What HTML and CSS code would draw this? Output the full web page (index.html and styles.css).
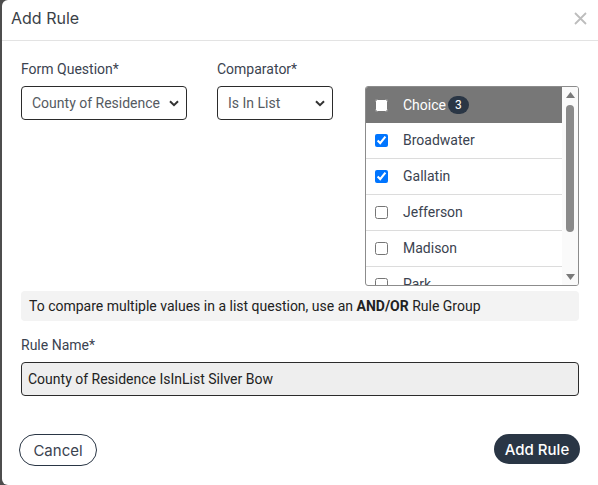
FILE: index.html
```html
<!DOCTYPE html>
<html lang="en">
<head>
<meta charset="utf-8">
<title>Add Rule</title>
<link rel="stylesheet" href="styles.css">
</head>
<body>
<div class="dialog">
  <div class="header">
    <div class="title">Add Rule</div>
    <svg class="close" width="13" height="13" viewBox="0 0 13 13"><path d="M1 1L12 12M12 1L1 12" stroke="#bdbdbd" stroke-width="1.8" fill="none"/></svg>
  </div>
  <div class="body">
    <div class="row">
      <div class="field f1">
        <label class="label">Form Question*</label>
        <div class="select">County of Residence</div>
      </div>
      <div class="field f2">
        <label class="label">Comparator*</label>
        <div class="select">Is In List</div>
      </div>
      <div class="listbox">
        <div class="list">
          <div class="list-head">
            <input type="checkbox" class="cb">
            <span class="head-text">Choice</span>
            <span class="badge">3</span>
          </div>
          <div class="item"><input type="checkbox" class="cb" checked><span>Broadwater</span></div>
          <div class="item"><input type="checkbox" class="cb" checked><span>Gallatin</span></div>
          <div class="item"><input type="checkbox" class="cb"><span>Jefferson</span></div>
          <div class="item"><input type="checkbox" class="cb"><span>Madison</span></div>
          <div class="item"><input type="checkbox" class="cb"><span>Park</span></div>
        </div>
        <div class="scrollbar">
          <svg class="arrow" width="9" height="6" viewBox="0 0 9 6"><path d="M4.5 0L9 6H0Z" fill="#7a7a7a"/></svg>
          <div class="track"><div class="thumb"></div></div>
          <svg class="arrow" width="9" height="6" viewBox="0 0 9 6"><path d="M0 0H9L4.5 6Z" fill="#7a7a7a"/></svg>
        </div>
      </div>
    </div>
    <div class="info">To compare multiple values in a list question, use an <b>AND/OR</b> Rule Group</div>
    <label class="label rn">Rule Name*</label>
    <div class="input">County of Residence IsInList Silver Bow</div>
  </div>
  <div class="footer">
    <button class="btn cancel">Cancel</button>
    <button class="btn primary">Add Rule</button>
  </div>
</div>
</body>
</html>
```
FILE: styles.css
```css
html, body {
  margin: 0;
  padding: 0;
}
body {
  background: #4d4d4d;
  width: 598px;
  height: 485px;
  overflow: hidden;
  font-family: Roboto, "Liberation Sans", sans-serif;
}
.dialog {
  margin-left: 2px;
  width: 596px;
  height: 485px;
  background: #fff;
  border-radius: 6px 0 0 6px;
  display: flex;
  flex-direction: column;
}
.header {
  height: 40px;
  border-bottom: 1px solid #e3e3e3;
  display: flex;
  align-items: center;
  justify-content: space-between;
  padding: 0 11px 0 9px;
}
.title {
  font-family: Inter, "Open Sans", sans-serif;
  font-size: 16px;
  color: #3a3f47;
  margin-top: -4px;
}
.close {
  margin-top: -4px;
}
.body {
  padding: 0 19px;
}
.row {
  display: flex;
  align-items: flex-start;
  margin-top: 18px;
}
.field {
  display: flex;
  flex-direction: column;
}
.f1 { width: 166px; }
.f2 { width: 116px; margin-left: 30px; }
.label {
  font-size: 14px;
  line-height: 20px;
  color: #3b4350;
  margin-bottom: 7px;
}
.select {
  box-sizing: border-box;
  height: 34px;
  border: 1px solid #2b2b2b;
  border-radius: 4px;
  padding: 0 20px 0 10px;
  font-size: 14px;
  line-height: 32px;
  color: #555a61;
  white-space: nowrap;
  background: url("data:image/svg+xml;utf8,<svg xmlns='http://www.w3.org/2000/svg' width='10' height='7' viewBox='0 0 10 7'><path d='M1 1.2L5 5.2L9 1.2' stroke='%23333' stroke-width='2' fill='none'/></svg>") no-repeat right 7px center;
}
.listbox {
  margin-left: 32px;
  margin-top: 27px;
  width: 214px;
  height: 200px;
  box-sizing: border-box;
  border: 1px solid #8c8c8c;
  border-radius: 3px;
  display: flex;
  overflow: hidden;
}
.list {
  flex: 1;
  overflow: hidden;
}
.list-head {
  height: 36px;
  background: #777777;
  display: flex;
  align-items: center;
  padding-left: 9px;
  color: #fff;
  font-size: 14px;
}
.cb {
  width: 13px;
  height: 13px;
  margin: 0 15px 0 0;
  flex: none;
}
.badge {
  margin-left: 2px;
  background: #2a3645;
  color: #fff;
  font-size: 12px;
  height: 18px;
  line-height: 18px;
  padding: 0 7px;
  border-radius: 9px;
}
.item {
  height: 35px;
  border-bottom: 1px solid #dcdcdc;
  display: flex;
  align-items: center;
  padding-left: 9px;
  font-size: 14px;
  color: #3b4350;
}
.item span {
  margin-top: -2px;
}
.scrollbar {
  width: 16px;
  background: #fafafa;
  display: flex;
  flex-direction: column;
  align-items: center;
}
.arrow {
  flex: none;
  margin: 5px 0;
}
.track {
  flex: 1;
  width: 100%;
  display: flex;
  justify-content: center;
}
.thumb {
  width: 8px;
  height: 127px;
  margin-top: 2px;
  background: #8a8a8a;
  border-radius: 4px;
}
.info {
  margin-top: 5px;
  height: 30px;
  line-height: 30px;
  background: #f3f3f3;
  border-radius: 4px;
  padding: 0 8px;
  font-size: 14px;
  color: #222;
}
.info b {
  font-weight: 700;
}
.label.rn {
  display: block;
  margin-top: 14px;
}
.input {
  box-sizing: border-box;
  height: 34px;
  border: 1px solid #2b2b2b;
  border-radius: 4px;
  background: #eeeeee;
  padding: 0 6px;
  font-size: 14px;
  line-height: 32px;
  color: #222;
}
.footer {
  margin-top: 38px;
  padding: 0 17px 0 17px;
  display: flex;
  justify-content: space-between;
  align-items: flex-start;
}
.btn {
  font-family: Inter, "Open Sans", sans-serif;
  font-size: 15px;
  border-radius: 16px;
  cursor: pointer;
}
.cancel {
  height: 32px;
  width: 78px;
  background: #fff;
  border: 1px solid #2a3645;
  color: #3b4350;
}
.primary {
  height: 30px;
  width: 86px;
  margin-right: 1px;
  background: #2a3645;
  border: none;
  color: #fff;
  font-weight: 500;
  border-radius: 15px;
}
```
